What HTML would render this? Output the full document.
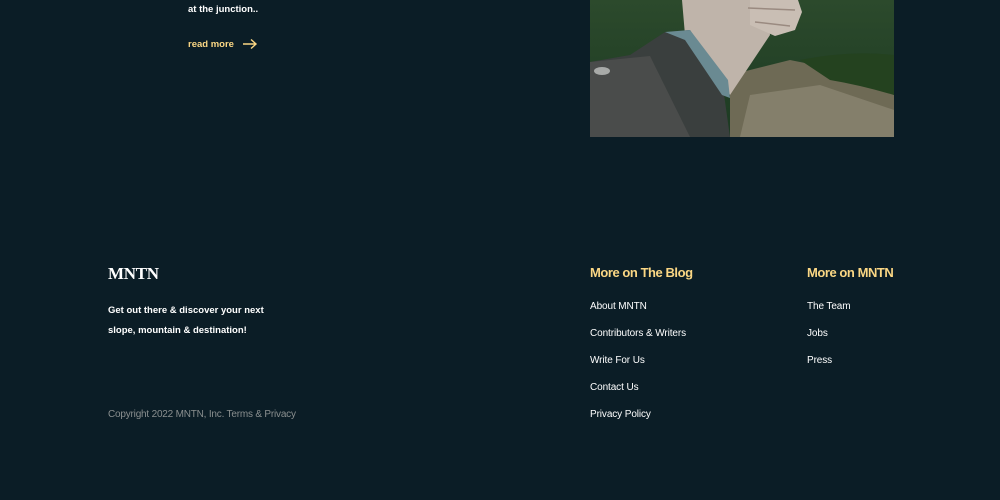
<!DOCTYPE html>
<html><head><style>
html,body{margin:0;padding:0;width:1000px;height:500px;overflow:hidden;background:#0b1d26;font-family:"Liberation Sans",sans-serif;}
.a{position:absolute;white-space:nowrap;}
.w{color:#fff;font-size:9.5px;font-weight:bold;}
.l{color:#fff;font-size:10px;letter-spacing:-0.1px;}
.h{color:#fbd784;font-size:13px;font-weight:bold;letter-spacing:-0.45px;}
</style></head><body>
<div class="a w" style="left:188px;top:4px;">at the junction..</div>
<div class="a" style="left:188px;top:39px;color:#fbd784;font-size:9.5px;font-weight:bold;">read more</div>
<svg class="a" style="left:242px;top:38px" width="16" height="12" viewBox="0 0 16 12"><path d="M1 6H14M9 1.5L14 6L9 10.5" stroke="#fbd784" stroke-width="1.4" fill="none"/></svg>

<svg class="a" style="left:590px;top:0" width="304" height="137" viewBox="0 0 304 137">
<defs><linearGradient id="g" x1="0" y1="0" x2="0" y2="1"><stop offset="0" stop-color="#2c4a2c"/><stop offset="1" stop-color="#1c3a22"/></linearGradient></defs>
<rect width="304" height="137" fill="url(#g)"/>
<path d="M140 75 L200 60 L250 70 L304 95 L304 137 L140 137Z" fill="#6e6a55"/>
<path d="M160 95 L230 85 L304 110 L304 137 L150 137Z" fill="#8a8470" opacity="0.8"/>
<path d="M210 60 Q260 50 304 55 L304 95 Q270 85 240 80Z" fill="#24421f"/>
<path d="M92 0 L175 0 L180 35 L150 80 L140 95 L120 60 L95 35Z" fill="#bfb4aa"/>
<path d="M160 0 L208 0 L212 12 L205 30 L185 36 L160 25Z" fill="#c9beb4"/>
<path d="M158 8 L205 10 M165 22 L200 26" stroke="#9a8a80" stroke-width="1.5"/>
<path d="M0 62 L40 55 L75 32 L100 30 L132 80 L140 137 L0 137Z" fill="#3a3f3e"/>
<path d="M75 32 L100 30 L138 80 L140 98 L132 95 L95 40Z" fill="#6a8a92"/>
<path d="M0 62 L60 56 L100 137 L0 137Z" fill="#4a4c4b"/>
<ellipse cx="12" cy="71" rx="8" ry="4" fill="#a8aaa8"/>
</svg>

<div class="a" style="left:108px;top:264px;color:#fff;font-family:'Liberation Serif',serif;font-size:17px;font-weight:bold;letter-spacing:-0.3px;">MNTN</div>
<div class="a w" style="left:108px;top:305px;">Get out there &amp; discover your next</div>
<div class="a w" style="left:108px;top:325px;">slope, mountain &amp; destination!</div>
<div class="a" style="left:108px;top:409px;color:#8a8f8f;font-size:10px;letter-spacing:-0.2px;">Copyright 2022 MNTN, Inc. Terms &amp; Privacy</div>

<div class="a h" style="left:590px;top:265px;">More on The Blog</div>
<div class="a l" style="left:590px;top:301px;">About MNTN</div>
<div class="a l" style="left:590px;top:328px;">Contributors &amp; Writers</div>
<div class="a l" style="left:590px;top:355px;">Write For Us</div>
<div class="a l" style="left:590px;top:382px;">Contact Us</div>
<div class="a l" style="left:590px;top:409px;">Privacy Policy</div>

<div class="a h" style="left:807px;top:265px;">More on MNTN</div>
<div class="a l" style="left:807px;top:301px;">The Team</div>
<div class="a l" style="left:807px;top:328px;">Jobs</div>
<div class="a l" style="left:807px;top:355px;">Press</div>
</body></html>
